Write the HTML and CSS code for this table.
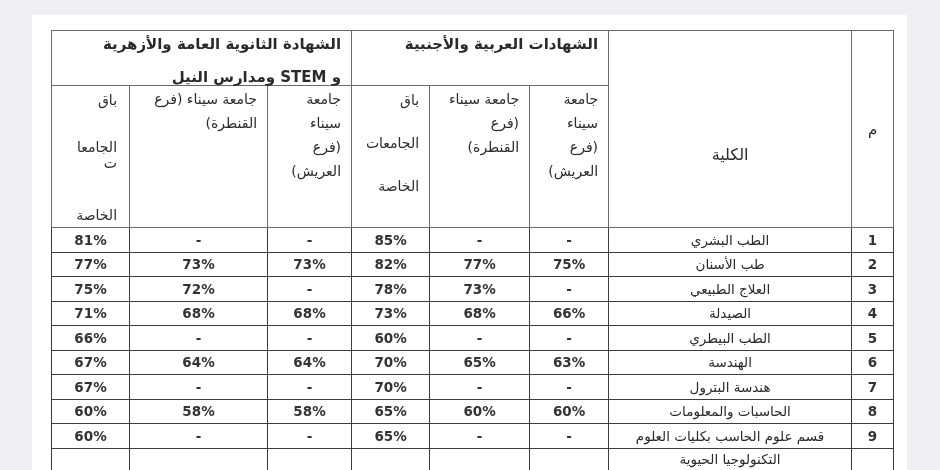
FILE: index.html
```html
<!DOCTYPE html>
<html lang="ar">
<head>
<meta charset="utf-8">
<title>الحد الأدنى للقبول</title>
<link rel="stylesheet" href="styles.css">
</head>
<body>
<div class="page">
<table class="grid" dir="rtl">
  <colgroup>
    <col class="w-num"><col class="w-name"><col class="w-a"><col class="w-b"><col class="w-c"><col class="w-d"><col class="w-e"><col class="w-f">
  </colgroup>
  <thead>
    <tr class="group-row">
      <th class="h-num" rowspan="2">م</th>
      <th class="h-name" rowspan="2">الكلية</th>
      <th class="h-group" colspan="3"><div>الشهادات العربية والأجنبية</div></th>
      <th class="h-group" colspan="3"><div>الشهادة الثانوية العامة والأزهرية</div><div>و STEM ومدارس النيل</div></th>
    </tr>
    <tr class="sub-row">
      <th class="h-sub">جامعة<br>سيناء<br>(فرع<br>العريش)</th>
      <th class="h-sub">جامعة سيناء<br>(فرع<br>القنطرة)</th>
      <th class="h-sub spaced"><div>باق</div><div>الجامعات</div><div>الخاصة</div></th>
      <th class="h-sub">جامعة<br>سيناء<br>(فرع<br>العريش)</th>
      <th class="h-sub">جامعة سيناء (فرع<br>القنطرة)</th>
      <th class="h-sub spaced wide"><div>باق</div><div>الجامعا<br>ت</div><div>الخاصة</div></th>
    </tr>
  </thead>
  <tbody>
    <tr><td class="n">1</td><td class="name">الطب البشري</td><td>-</td><td>-</td><td>85%</td><td>-</td><td>-</td><td>81%</td></tr>
    <tr><td class="n">2</td><td class="name">طب الأسنان</td><td>75%</td><td>77%</td><td>82%</td><td>73%</td><td>73%</td><td>77%</td></tr>
    <tr><td class="n">3</td><td class="name">العلاج الطبيعي</td><td>-</td><td>73%</td><td>78%</td><td>-</td><td>72%</td><td>75%</td></tr>
    <tr><td class="n">4</td><td class="name">الصيدلة</td><td>66%</td><td>68%</td><td>73%</td><td>68%</td><td>68%</td><td>71%</td></tr>
    <tr><td class="n">5</td><td class="name">الطب البيطري</td><td>-</td><td>-</td><td>60%</td><td>-</td><td>-</td><td>66%</td></tr>
    <tr><td class="n">6</td><td class="name">الهندسة</td><td>63%</td><td>65%</td><td>70%</td><td>64%</td><td>64%</td><td>67%</td></tr>
    <tr><td class="n">7</td><td class="name">هندسة البترول</td><td>-</td><td>-</td><td>70%</td><td>-</td><td>-</td><td>67%</td></tr>
    <tr><td class="n">8</td><td class="name">الحاسبات والمعلومات</td><td>60%</td><td>60%</td><td>65%</td><td>58%</td><td>58%</td><td>60%</td></tr>
    <tr><td class="n">9</td><td class="name">قسم علوم الحاسب بكليات العلوم</td><td>-</td><td>-</td><td>65%</td><td>-</td><td>-</td><td>60%</td></tr>
    <tr class="last"><td class="n"></td><td class="name">التكنولوجيا الحيوية</td><td></td><td></td><td></td><td></td><td></td><td></td></tr>
  </tbody>
</table>
</div>
</body>
</html>
```

FILE: styles.css
```css
html, body {
  margin: 0;
  padding: 0;
  background: #eef0f4;
  overflow: hidden;
}

.page {
  margin: 15px 33px 0 32px;
  height: 455px;
  background: #ffffff;
  padding: 15px 14px 0 19px;
  box-sizing: border-box;
  overflow: hidden;
}

.grid {
  width: 842px;
  table-layout: fixed;
  border-collapse: collapse;
  font-family: "DejaVu Sans", sans-serif;
  color: #2a2a2a;
  filter: blur(0.45px);
}

.w-num { width: 42px; }
.w-name { width: 243px; }
.w-a { width: 79px; }
.w-b { width: 100px; }
.w-c { width: 78px; }
.w-d { width: 84px; }
.w-e { width: 138px; }
.w-f { width: 78px; }

.grid th,
.grid td {
  border: 1px solid #3c3c3c;
  padding: 0;
}

.grid thead th {
  border-color: #6a6a6a;
  font-weight: normal;
}

.group-row { height: 55px; }
.sub-row { height: 142px; }

.h-num {
  font-size: 15px;
  vertical-align: middle;
  text-align: center;
}

.h-name {
  font-size: 16px;
  text-align: center;
  vertical-align: top;
  padding-top: 114px !important;
  line-height: 20px;
}

.h-group {
  font-size: 15px;
  font-weight: bold !important;
  text-align: right;
  vertical-align: top;
  line-height: 16px;
  padding: 5px 10px 0 6px !important;
}

.h-group div + div {
  margin-top: 17px;
}

.h-sub {
  font-size: 14px;
  text-align: right;
  vertical-align: top;
  line-height: 24px;
  padding: 1px 10px 0 2px !important;
}

.spaced {
  line-height: 16px;
  padding-top: 6px !important;
}

.spaced div {
  margin-bottom: 27px;
}

.spaced.wide {
  padding-right: 12px !important;
}

.spaced.wide div {
  margin-bottom: 31px;
}

.spaced.wide div:nth-child(2) {
  margin-bottom: 36px;
}

.spaced div:last-child,
.spaced.wide div:last-child {
  margin-bottom: 0;
}

.grid tbody tr { height: 24.5px; }

.grid tbody td {
  text-align: center;
  vertical-align: middle;
  font-size: 13.5px;
  font-weight: bold;
  color: #333333;
  line-height: 18px;
}

.grid tbody td.name {
  font-size: 13.5px;
  font-weight: normal;
  color: #2a2a2a;
}

.grid tbody td.n {
  font-size: 13.5px;
}

.grid tbody tr.last { height: 40px; }

.grid tbody tr.last td {
  vertical-align: top;
  padding-top: 1px;
}
```
